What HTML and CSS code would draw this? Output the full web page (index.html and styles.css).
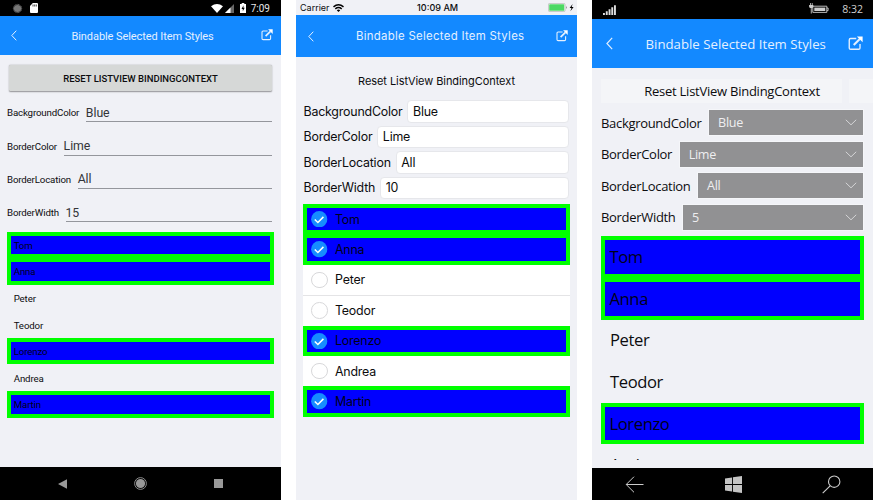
FILE: index.html
```html
<!DOCTYPE html>
<html lang="en">
<head>
<meta charset="utf-8">
<title>Bindable Selected Item Styles</title>
<link rel="stylesheet" href="styles.css">
</head>
<body>
<svg class="defs" width="0" height="0">
  <symbol id="open" viewBox="0 0 12 12"><path d="M6.6 2H2.1Q1 2 1 3.1v6.4q0 1.1 1.1 1.1h6.4q1.1 0 1.1-1.1V6.3" fill="none" stroke="currentColor" stroke-width="1.1"/><path d="M4.6 7.2 9.4 2.4" fill="none" stroke="currentColor" stroke-width="1.7"/><path d="M7.1.3h4.6v4.6z" fill="#fff"/></symbol>
  <symbol id="back" viewBox="0 0 6 11"><path d="M5.3.7.8 5.5l4.5 4.8" fill="none" stroke="currentColor" stroke-width="1"/></symbol>
  <symbol id="down" viewBox="0 0 12 7"><path d="m.8.8 5.2 5 5.2-5" fill="none" stroke="currentColor" stroke-width="1"/></symbol>
  <symbol id="check" viewBox="0 0 17 17"><circle cx="8.5" cy="8.5" r="8.4" fill="#168cff"/><path d="m3.9 8.7 3.2 3.1 5.7-5.7" fill="none" stroke="#fff" stroke-width="1.6"/></symbol>
</svg>
<div class="stage">
  <section class="phone android">
    <div class="status">
      <svg width="11" height="11" viewBox="0 0 11 11"><circle cx="5.5" cy="5.5" r="3.6" fill="#777"/><circle cx="5.5" cy="5.5" r="4.1" fill="none" stroke="#858585" stroke-width=".9" stroke-dasharray="1 .5"/></svg>
      <svg class="sd" width="8" height="10" viewBox="0 0 8 10"><path d="M2.8 0H7q1 0 1 1v8q0 1-1 1H1Q0 10 0 9V3z" fill="#fff"/><path d="M3 1.5v2M4.7 1.5v2M6.3 1.5v2" stroke="#000" stroke-width=".7"/></svg>
      <svg class="wifi" width="12" height="9" viewBox="0 0 12 9"><path d="M0 2.2Q6-2.2 12 2.2L6 9z" fill="#fff"/></svg>
      <svg class="cell" width="9" height="9" viewBox="0 0 9 9"><path d="M9 0v9H0z" fill="#666"/><path d="M5.5 3.5V9H0z" fill="#fff"/></svg>
      <svg class="batt" width="6" height="10" viewBox="0 0 6 10"><path d="M0 1h1.7V0h2.6v1H6v9H0z" fill="#fff"/><path d="M3.5 2.2 1.5 6h1.3v2.3L4.7 4.8H3.4z" fill="#000"/></svg>
      <span class="time">7:09</span>
    </div>
    <header><svg class="back"><use href="#back"/></svg><h1>Bindable Selected Item Styles</h1><svg class="open"><use href="#open"/></svg></header>
    <main>
      <button>RESET LISTVIEW BINDINGCONTEXT</button>
      <div class="form">
        <div class="field"><label>BackgroundColor</label><div class="value">Blue</div></div>
        <div class="field"><label>BorderColor</label><div class="value">Lime</div></div>
        <div class="field"><label>BorderLocation</label><div class="value">All</div></div>
        <div class="field"><label>BorderWidth</label><div class="value">15</div></div>
      </div>
      <ul>
        <li class="on">Tom</li><li class="on">Anna</li><li>Peter</li><li>Teodor</li><li class="on">Lorenzo</li><li>Andrea</li><li class="on">Martin</li>
      </ul>
    </main>
    <nav>
      <svg width="9" height="10" viewBox="0 0 9 10"><path d="M9 .3v9.4L0 5z" fill="#999"/></svg>
      <svg width="13" height="13" viewBox="0 0 13 13"><circle cx="6.5" cy="6.5" r="4.6" fill="#999"/><circle cx="6.5" cy="6.5" r="5.9" fill="none" stroke="#999" stroke-width=".9"/></svg>
      <svg width="9" height="9" viewBox="0 0 9 9"><path d="M0 0h9v9H0z" fill="#999"/></svg>
    </nav>
  </section>

  <section class="phone ios">
    <div class="status">
      <span class="carrier">Carrier</span>
      <svg class="wifi" width="11" height="8" viewBox="0 0 11 8"><g fill="none" stroke="#000" stroke-width="1.5"><path d="M.5 2.9q5-4.2 10 0"/><path d="M2.3 4.9q3.2-2.6 6.4 0"/></g><path d="M3.8 6.2q1.7-1.2 3.4 0L5.5 8z"/></svg>
      <span class="time">10:09 AM</span>
      <svg class="batt" width="26" height="9" viewBox="0 0 26 9"><rect x=".4" y=".4" width="16.6" height="8.2" rx="1.3" fill="#fff" stroke="#a0a5a0" stroke-width=".6"/><rect x="1.2" y="1.2" width="15" height="6.6" rx=".6" fill="#4cd964"/><path d="M18 3.2v2.6q1-.3 1-1.3t-1-1.3z" fill="#999"/><path d="m24.6.9-3 4h1.9L22.4 8.3l3.2-4.2h-1.9z"/></svg>
    </div>
    <header><svg class="back"><use href="#back"/></svg><h1>Bindable Selected Item Styles</h1><svg class="open"><use href="#open"/></svg></header>
    <main>
      <button>Reset ListView BindingContext</button>
      <div class="form">
        <div class="field"><label>BackgroundColor</label><div class="value">Blue</div></div>
        <div class="field"><label>BorderColor</label><div class="value">Lime</div></div>
        <div class="field"><label>BorderLocation</label><div class="value">All</div></div>
        <div class="field"><label>BorderWidth</label><div class="value">10</div></div>
      </div>
      <ul>
        <li class="on"><svg class="tick"><use href="#check"/></svg>Tom</li>
        <li class="on"><svg class="tick"><use href="#check"/></svg>Anna</li>
        <li><i class="ring"></i>Peter</li>
        <li class="ruled"><i class="ring"></i>Teodor</li>
        <li class="on"><svg class="tick"><use href="#check"/></svg>Lorenzo</li>
        <li><i class="ring"></i>Andrea</li>
        <li class="on"><svg class="tick"><use href="#check"/></svg>Martin</li>
      </ul>
    </main>
  </section>

  <section class="phone windows">
    <div class="status">
      <svg width="13" height="10" viewBox="0 0 13 10"><path d="M0 8h1.9v2H0zM2.8 6.2h1.9V10H2.8zM5.6 4.2h1.9V10H5.6zM8.3 2.2h1.9V10H8.3zM11 .3h1.9V10H11z" fill="#ddd"/></svg>
      <svg class="batt" width="20" height="11" viewBox="0 0 20 11"><path d="M3.8 3.2h14v6.2h-14zM17.8 5h1.3v2.6h-1.3" fill="none" stroke="#ccc" stroke-width=".9"/><path d="M5.3 4.6h11V8h-11z" fill="#ccc"/><path d="M.1 2h4.2v1.8q0 1.4-2.1 1.4T.1 3.8zM1 0h.8v2H1zM2.8 0h.8v2h-.8zM1.8 5h.9v5.5h-.9z" fill="#ccc"/></svg>
      <span class="time">8:32</span>
    </div>
    <header><svg class="back"><use href="#back"/></svg><h1>Bindable Selected Item Styles</h1><svg class="open"><use href="#open"/></svg></header>
    <main>
      <div class="buttons"><button>Reset ListView BindingContext</button><span class="spare"></span></div>
      <div class="form">
        <div class="field"><label>BackgroundColor</label><div class="value">Blue<svg class="down"><use href="#down"/></svg></div></div>
        <div class="field"><label>BorderColor</label><div class="value">Lime<svg class="down"><use href="#down"/></svg></div></div>
        <div class="field"><label>BorderLocation</label><div class="value">All<svg class="down"><use href="#down"/></svg></div></div>
        <div class="field"><label>BorderWidth</label><div class="value">5<svg class="down"><use href="#down"/></svg></div></div>
      </div>
      <ul>
        <li class="on">Tom</li><li class="on">Anna</li><li>Peter</li><li>Teodor</li><li class="on">Lorenzo</li><li>Andrea</li>
      </ul>
    </main>
    <nav>
      <svg width="19" height="17" viewBox="0 0 19 17"><path d="M18.5 8.5H1.2M9 .7 1.2 8.5 9 16.3" fill="none" stroke="#ccc" stroke-width="1"/></svg>
      <svg width="17" height="17" viewBox="0 0 17 17"><path d="M0 2.4 7 1.4v6.7H0zM7.9 1.3 17 0v8.1H7.9zM0 8.9h7v6.7L0 14.6zM7.9 8.9H17V17l-9.1-1.3z" fill="#c4c4c4"/></svg>
      <svg width="19" height="19" viewBox="0 0 19 19"><circle cx="12.2" cy="6.7" r="5.7" fill="none" stroke="#ccc" stroke-width="1.1"/><path d="M8.1 10.8.7 18.2" stroke="#ccc" stroke-width="1.1"/></svg>
    </nav>
  </section>
</div>
</body>
</html>
```
FILE: styles.css
```css
* { box-sizing: border-box; }
body { margin: 0; background: #fff; color: #0c0c0e; }
svg { display: block; flex: none; }
.defs { position: absolute; }
.stage { display: flex; gap: 15px; width: 873px; height: 500px; overflow: hidden; }
.phone { width: 281px; flex: none; height: 500px; display: flex; flex-direction: column; background: #f0f1f6; overflow: hidden; white-space: nowrap; }
.status { display: flex; align-items: center; flex: none; }
header { display: flex; align-items: center; flex: none; background: #1389ff; color: #e4f0ff; }
h1 { margin: 0; font-weight: 400; flex: 1; }
main { flex: 1; min-height: 0; display: flex; flex-direction: column; }
button { border: 0; padding: 0; display: block; flex: none; color: #0c0c0e; }
.form, .field { display: flex; }
.form { flex-direction: column; flex: none; }
.value { flex: 1; display: flex; align-items: center; }
ul { list-style: none; margin: 0; padding: 0; flex: none; }
li { display: flex; align-items: center; }
.on { border: 4px solid #0f0; background: #00f; color: #000018; }
nav { background: #000; display: flex; align-items: center; flex: none; }

/* Android */
.android { font-family: Roboto, sans-serif; }
.android .status { height: 16.3px; background: #000; padding: 0 11px 0 12px; }
.android .sd { margin-left: 7px; }
.android .status .wifi { margin-left: auto; }
.android .cell { margin-left: 2px; }
.android .status .batt { margin: 0 5px 0 6px; }
.android .time { color: #e6e6e6; font-size: 10px; }
.android header { height: 38.4px; padding: 1px 8px 0 10.5px; }
.android h1 { font-size: 11px; letter-spacing: -.08px; padding: 1px 0 0 55px; }
.android .back { width: 6px; height: 11px; }
.android .open { width: 12px; height: 12px; margin-top: -2px; }
.android button { margin: 10.3px 9px 0; padding-top: 1px; height: 26px; font: 500 9.5px Roboto, sans-serif; background: #d6d8d7; border-radius: 1.5px; box-shadow: 0 .5px 1.5px #0006; }
.android .form { padding: 4.9px 9px 0 7px; }
.android .field { height: 33.45px; align-items: center; }
.android label { font-size: 9.7px; letter-spacing: -.15px; margin-right: 6.6px; }
.android .value { height: 20px; margin-top: -1px; border-bottom: 1px solid #94969c; font-size: 12.3px; letter-spacing: -.05px; color: #333438; padding-top: 2px; }
.android ul { margin: 1.9px 7px 0; }
.android li { height: 26.6px; padding: 1px 6.7px 0; font-size: 9.7px; letter-spacing: -.13px; }
.android .on { padding: 1px 2.7px 0; }
.android nav { height: 33px; padding: 0 58px; justify-content: space-between; }

/* iOS */
.ios { font-family: Inter, sans-serif; }
.ios .status { height: 15px; padding: 0 3px 0 4px; font-size: 9px; }
.ios .carrier { width: 33px; }
.ios .time { flex: 1; padding-left: 73px; font-weight: 500; font-size: 9.1px; }
.ios header { height: 42px; padding: 0 9px 0 12px; }
.ios .back { width: 6px; height: 11px; }
.ios h1 { font-size: 11.4px; letter-spacing: .29px; padding-left: 42px; }
.ios .open { width: 12px; height: 12px; }
.ios button { height: 43px; padding-top: 5px; background: none; font: 11px Inter, sans-serif; letter-spacing: -.06px; }
.ios .form { gap: 3px; padding: 0 8px 0 7.5px; }
.ios .field { height: 22.5px; align-items: center; }
.ios label { font-size: 12.4px; letter-spacing: -.2px; margin-right: 5px; }
.ios .value { height: 22.5px; background: #fff; border: 1px solid #e6e7eb; border-radius: 4px; padding: 0 5px 0 4.5px; font-size: 12.4px; letter-spacing: -.2px; }
.ios ul { margin: 5px 7.5px 0 7px; background: #fff; }
.ios li { height: 30.4px; padding: 0 8px; font-size: 12.4px; letter-spacing: -.2px; }
.ios .on { padding: 0 4px; }
.ios .ruled { border-top: 1px solid #e4e4e6; padding-bottom: 1px; }
.ring { width: 16.5px; height: 16.5px; border: 1px solid #d8d8da; border-radius: 50%; margin-right: 7.5px; flex: none; }
.tick { width: 16.5px; height: 16.5px; margin-right: 7.5px; }

/* Windows */
.windows { font-family: "Open Sans", sans-serif; }
.windows .status { height: 19px; background: #000; padding: 0 10px 0 11px; }
.windows .status .batt { margin: -2px 13px 0 auto; }
.windows .time { color: #d0d0d0; font-size: 10.5px; margin-top: -1px; }
.windows header { height: 49px; padding: 0 10px 0 14px; }
.windows .back { width: 7px; height: 13px; }
.windows h1 { font-size: 13.2px; letter-spacing: .02px; padding-left: 32.5px; }
.windows .open { width: 15px; height: 15px; }
.buttons { display: flex; gap: 7px; padding: 11px 0 0 9px; flex: none; }
.windows button { width: 241px; height: 24px; padding-left: 21px; background: #f4f5f8; font: 13px "Open Sans", sans-serif; letter-spacing: -.25px; }
.spare { flex: 1; background: #f4f5f8; }
.windows .form { gap: 6.6px; padding: 7px 10px 0 9px; }
.windows .field { height: 25px; align-items: center; }
.windows label { font-size: 13px; letter-spacing: -.31px; margin-right: 7.5px; }
.windows .value { height: 25px; background: #919193; color: #eeeef0; padding: 0 6px 0 9px; font-size: 12.6px; letter-spacing: -.3px; justify-content: space-between; outline: 1px solid #f5f6f9; }
.down { width: 12px; height: 7px; color: #d4d4d6; }
.windows main { overflow: hidden; margin-bottom: 8px; }
.windows ul { margin: 6.7px 9px 0; }
.windows li { height: 41.6px; padding: 0 9px 1px; font-size: 16.6px; letter-spacing: -.4px; }
.windows .on { border-width: 4.5px; padding: 0 4.5px 1px; }
.windows nav { height: 32px; padding: 0 32px 0 33px; justify-content: space-between; }
```
